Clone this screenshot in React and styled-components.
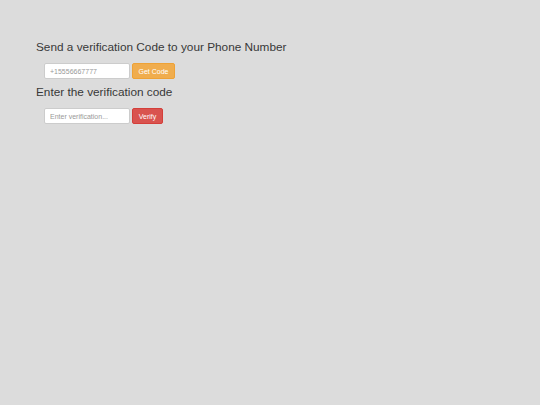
import React, { useState } from "react";
import styled, { createGlobalStyle } from "styled-components";

const GlobalStyle = createGlobalStyle`
  html, body {
    margin: 0;
    padding: 0;
    background: #dcdcdc;
    font-family: "Liberation Sans", Arial, sans-serif;
  }
`;

const Page = styled.div`
  min-height: 405px;
  background: #dcdcdc;
  padding: 40px 0 0 36px;
  box-sizing: border-box;
`;

const Heading = styled.h3`
  margin: 0 0 8px;
  font-size: 11.8px;
  line-height: 15px;
  font-weight: 400;
  color: #383838;
`;

const FormRow = styled.div`
  display: flex;
  align-items: stretch;
  gap: 2px;
  padding-left: 8px;
  margin-bottom: ${(props) => props.spacing || "0"};
`;

const Input = styled.input`
  width: 86px;
  height: 16px;
  box-sizing: border-box;
  padding: 0 5px;
  border: 1px solid #cccccc;
  border-radius: 2px;
  background: #ffffff;
  font-family: inherit;
  font-size: 7px;
  color: #555555;
  outline: none;
  &::placeholder {
    color: #999999;
  }
`;

const Button = styled.button`
  width: ${(props) => props.width};
  height: 16px;
  box-sizing: border-box;
  padding: 0;
  border: 1px solid ${(props) => props.border};
  border-radius: 2px;
  background: ${(props) => props.bg};
  color: #ffffff;
  font-family: inherit;
  font-size: 7px;
  cursor: pointer;
`;

const App = () => {
  const [phone, setPhone] = useState("");
  const [code, setCode] = useState("");

  return (
    <>
      <GlobalStyle />
      <Page>
        <Heading>Send a verification Code to your Phone Number</Heading>
        <FormRow spacing="6px">
          <Input
            value={phone}
            onChange={(e) => setPhone(e.target.value)}
            placeholder="+15556667777"
          />
          <Button width="43px" bg="#f0ad4e" border="#eea236">
            Get Code
          </Button>
        </FormRow>
        <Heading>Enter the verification code</Heading>
        <FormRow>
          <Input
            value={code}
            onChange={(e) => setCode(e.target.value)}
            placeholder="Enter verification..."
          />
          <Button width="31px" bg="#d9534f" border="#d43f3a">
            Verify
          </Button>
        </FormRow>
      </Page>
    </>
  );
};

export default App;
